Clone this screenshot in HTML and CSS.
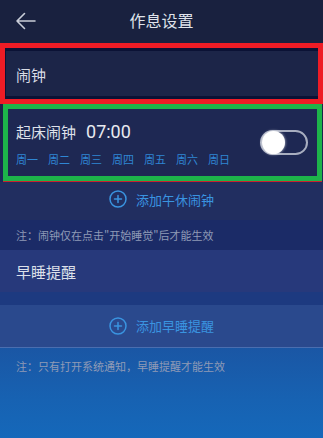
FILE: index.html
```
<!DOCTYPE html>
<html lang="zh-CN">
<head>
<meta charset="utf-8">
<title>作息设置</title>
<link rel="stylesheet" href="styles.css">
</head>
<body>
<div class="page">
  <header class="topbar">
    <svg class="back" width="22" height="18" viewBox="0 0 22 18">
      <path d="M20 9H2M9.5 1.5L2 9l7.5 7.5" fill="none" stroke="#c9cdd8" stroke-width="1.6" stroke-linecap="round" stroke-linejoin="round"/>
    </svg>
    <h1 class="title">作息设置</h1>
  </header>

  <section class="box-red">
    <div class="red-inner">闹钟</div>
  </section>

  <section class="box-green">
    <div class="alarm">
      <div class="alarm-info">
        <div class="alarm-head"><span class="alarm-name">起床闹钟</span><span class="alarm-time">07:00</span></div>
        <div class="days">
          <span>周一</span><span>周二</span><span>周三</span><span>周四</span><span>周五</span><span>周六</span><span>周日</span>
        </div>
      </div>
      <div class="toggle"><span class="knob"></span></div>
    </div>
  </section>

  <div class="add-row add-1">
    <svg class="plus" width="18" height="18" viewBox="0 0 18 18">
      <circle cx="9" cy="9" r="8" fill="none" stroke="#3a94e0" stroke-width="1.5"/>
      <path d="M9 5.5v7M5.5 9h7" stroke="#3a94e0" stroke-width="1.5" stroke-linecap="round"/>
    </svg>
    <span>添加午休闹钟</span>
  </div>

  <div class="note note-1">注：闹钟仅在点击"开始睡觉"后才能生效</div>

  <div class="row-title">早睡提醒</div>

  <div class="gap"></div>

  <div class="add-row add-2">
    <svg class="plus" width="18" height="18" viewBox="0 0 18 18">
      <circle cx="9" cy="9" r="8" fill="none" stroke="#3a94e0" stroke-width="1.5"/>
      <path d="M9 5.5v7M5.5 9h7" stroke="#3a94e0" stroke-width="1.5" stroke-linecap="round"/>
    </svg>
    <span>添加早睡提醒</span>
  </div>

  <div class="note note-2">注：只有打开系统通知，早睡提醒才能生效</div>
</div>
</body>
</html>
```
FILE: styles.css
```
* { box-sizing: border-box; }
html, body { margin: 0; padding: 0; }
body {
  width: 323px;
  height: 438px;
  overflow: hidden;
  font-family: "Noto Sans CJK SC", "Noto Sans", sans-serif;
  background: linear-gradient(#18203e 0px, #1a2348 110px, #1e2c62 220px, #1d3676 300px, #1a56a4 346px, #1762b2 400px, #1568ba 438px);
}
.page { display: flex; flex-direction: column; }

.topbar {
  height: 43px;
  background: #19213f;
  display: flex;
  align-items: center;
  position: relative;
}
.back { margin-left: 15px; margin-top: -2px; }
.title {
  position: absolute;
  left: 0; right: 0; top: 0;
  margin: 0;
  line-height: 40px;
  text-align: center;
  font-size: 16px;
  font-weight: normal;
  color: #dfe2ea;
}

.box-red {
  height: 61px;
  border: 5px solid #ee1c25;
  background: #0b1235;
  padding: 3px 0 3px 1px;
}
.red-inner {
  height: 45px;
  background: #1c2548;
  color: #d9dce5;
  font-size: 15px;
  display: flex;
  align-items: center;
  padding-left: 10px;
  padding-top: 2px;
}

.box-green {
  margin: 0 1px 0 3px;
  height: 77px;
  border: 5px solid #1db44a;
  box-shadow: 0 1px 0 #c8242c;
  background: #1e2853;
}
.alarm {
  height: 100%;
  display: flex;
  align-items: center;
  justify-content: space-between;
  padding: 0 9px 0 8px;
}
.alarm-info { display: flex; flex-direction: column; padding-top: 2px; }
.alarm-head { display: flex; align-items: baseline; height: 26px; }
.alarm-name { font-size: 15px; color: #dfe2ea; }
.alarm-time { font-size: 18px; color: #e8eaf0; margin-left: 10px; font-family: "Roboto", "Noto Sans", sans-serif; }
.days {
  display: flex;
  gap: 10px;
  margin-top: 4px;
  font-size: 11px;
  color: #2f86d4;
  line-height: 16px;
}
.days span { width: 22px; }
.toggle {
  width: 48px;
  height: 25px;
  border: 2px solid #a8aec0;
  border-radius: 13px;
  position: relative;
}
.knob {
  position: absolute;
  left: 0px;
  top: -1px;
  width: 23px;
  height: 23px;
  border-radius: 50%;
  background: #ffffff;
  box-shadow: 0 0 3px rgba(255,255,255,0.8);
}

.add-row {
  display: flex;
  align-items: center;
  justify-content: center;
  gap: 9px;
  font-size: 13px;
  color: #3a94e0;
}
.add-1 {
  height: 38px;
  margin-top: 1px;
  background: #212e60;
  padding-bottom: 4px;
}
.add-2 {
  height: 43px;
  background: #2a498d;
  border-bottom: 1px solid #4a6eb0;
  padding-bottom: 1px;
}

.note {
  font-size: 11px;
  color: #8f9ab6;
  padding-left: 16px;
}
.note-1 {
  height: 30px;
  background: #1b2b67;
  display: flex;
  align-items: center;
}
.note-2 { padding-top: 10px; line-height: 16px; }

.row-title {
  height: 42px;
  background: #27397b;
  color: #dde1ea;
  font-size: 15px;
  display: flex;
  align-items: center;
  padding-left: 16px;
}
.gap { height: 13px; background: #1d3a80; }
```
